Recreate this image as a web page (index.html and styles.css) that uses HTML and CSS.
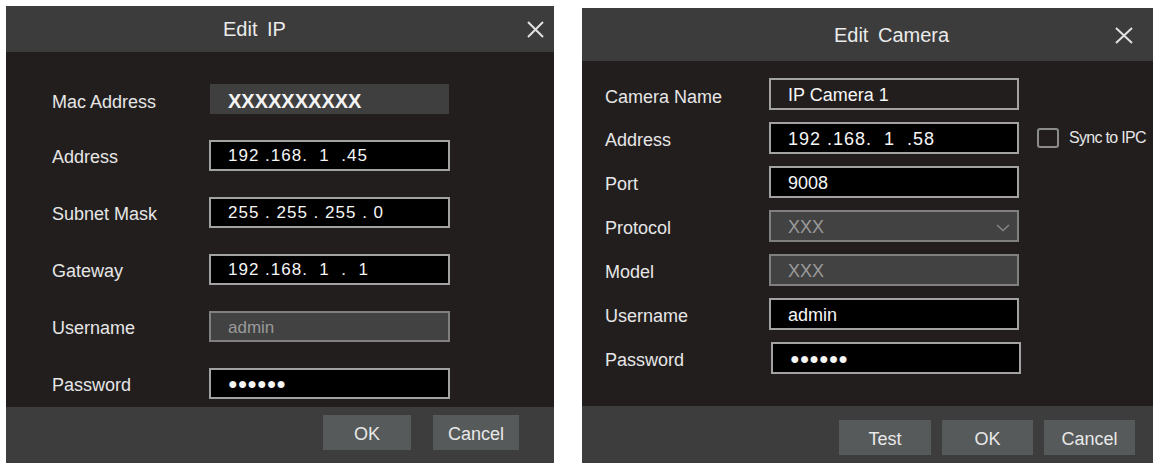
FILE: index.html
```html
<!DOCTYPE html>
<html>
<head>
<meta charset="utf-8">
<link rel="stylesheet" href="styles.css">
</head>
<body>
<div class="page">
  <div class="dialog dialog-ip">
    <div class="header">
      <span class="title">Edit IP</span>
      <svg class="close" width="17" height="17" viewBox="0 0 17 17"><path d="M1 1 L16 16 M16 1 L1 16" stroke="#e2e2e2" stroke-width="2" fill="none"/></svg>
    </div>
    <div class="body">
      <div class="label">Mac Address</div>
      <div class="mac">XXXXXXXXXX</div>
      <div class="label">Address</div>
      <div class="field ip">192 .168.  1  .45</div>
      <div class="label">Subnet Mask</div>
      <div class="field ip">255 . 255 . 255 . 0</div>
      <div class="label">Gateway</div>
      <div class="field ip">192 .168.  1  .  1</div>
      <div class="label">Username</div>
      <div class="field disabled">admin</div>
      <div class="label">Password</div>
      <div class="field dots">●●●●●●</div>
    </div>
    <div class="footer">
      <div class="btn btn-ok">OK</div>
      <div class="btn btn-cancel">Cancel</div>
    </div>
  </div>

  <div class="dialog dialog-cam">
    <div class="header">
      <span class="title">Edit Camera</span>
      <svg class="close" width="18" height="17" viewBox="0 0 18 17"><path d="M1 1 L17 16 M17 1 L1 16" stroke="#e2e2e2" stroke-width="2" fill="none"/></svg>
    </div>
    <div class="body">
      <div class="label">Camera Name</div>
      <div class="field name">IP Camera 1</div>
      <div></div>
      <div class="label">Address</div>
      <div class="field ip black">192 .168.  1  .58</div>
      <div class="sync"><span class="checkbox"></span><span class="sync-text">Sync to IPC</span></div>
      <div class="label">Port</div>
      <div class="field black">9008</div>
      <div></div>
      <div class="label">Protocol</div>
      <div class="field disabled select">XXX<svg class="chev" width="14" height="8" viewBox="0 0 14 8"><path d="M1 1 L7 6.5 L13 1" stroke="#8a8a8a" stroke-width="1.3" fill="none"/></svg></div>
      <div></div>
      <div class="label">Model</div>
      <div class="field disabled">XXX</div>
      <div></div>
      <div class="label">Username</div>
      <div class="field black">admin</div>
      <div></div>
      <div class="label">Password</div>
      <div class="field black dots pw">●●●●●●</div>
      <div></div>
    </div>
    <div class="footer">
      <div class="btn btn-test">Test</div>
      <div class="btn btn-ok2">OK</div>
      <div class="btn btn-cancel2">Cancel</div>
    </div>
  </div>
</div>
</body>
</html>
```

FILE: styles.css
```css
* { box-sizing: border-box; }
html, body { margin: 0; padding: 0; background: #ffffff; }
body {
  font-family: "Liberation Sans", Arial, sans-serif;
  width: 1168px;
  height: 476px;
  overflow: hidden;
}
.page {
  display: flex;
  align-items: flex-start;
  gap: 28px;
  padding: 6px 0 0 6px;
}
.dialog {
  display: flex;
  flex-direction: column;
  background: #221e1e;
}
.dialog-ip { width: 548px; height: 457px; }
.dialog-cam { width: 571px; height: 455px; margin-top: 2px; }

.header {
  display: flex;
  align-items: center;
  background: #3c3c3c;
  color: #ebebeb;
  font-size: 20px;
}
.dialog-ip .header { height: 46px; padding-right: 10px; }
.dialog-cam .header { height: 53px; padding-right: 20px; }
.title {
  flex: 1;
  text-align: center;
  word-spacing: 4px;
}
.dialog-ip .title { padding-right: 24px; }
.dialog-cam .title { padding-left: 86px; padding-top: 2px; }
.close { display: block; }
.dialog-cam .close { margin-top: 2px; }

.body {
  flex: 1;
  display: grid;
  align-items: center;
}
.dialog-ip .body {
  grid-template-columns: 157px 241px;
  grid-auto-rows: 31px;
  row-gap: 26px;
  padding: 31px 0 0 46px;
  align-content: start;
}
.dialog-cam .body {
  grid-template-columns: 164px 250px auto;
  grid-auto-rows: 32px;
  row-gap: 12px;
  padding: 17px 0 0 23px;
  align-content: start;
}
.label {
  color: #e6e6e6;
  font-size: 18px;
  padding-top: 4px;
  white-space: nowrap;
}
.dialog-ip .body .label:first-child { padding-top: 7px; }
.dialog-cam .body .label:first-child { padding-top: 6px; }
.mac {
  height: 30px;
  width: 239px;
  margin-left: 1px;
  background: #3f3f3f;
  color: #f4f4f4;
  font-size: 20px;
  font-weight: bold;
  padding-left: 18px;
  line-height: 35px;
}
.field {
  height: 100%;
  border: 2px solid #a2a2a2;
  background: #000;
  color: #f6f6f6;
  font-size: 17px;
  padding-left: 17px;
  display: flex;
  align-items: center;
  white-space: pre;
}
.dialog-cam .field { font-size: 18px; padding-top: 3px; }
.field.ip { letter-spacing: 1px; }
.field.name { background: #221e1e; }
.field.disabled {
  background: #424242;
  border-color: #808080;
  color: #9a9a9a;
}
.dialog-ip .field.disabled { padding-top: 2px; }
.field.select { justify-content: space-between; padding-right: 7px; }
.chev { display: block; }
.field.dots { font-size: 16px; letter-spacing: 0px; }
.dialog-cam .field.dots { font-size: 16px; padding-top: 1px; }
.field.pw { margin-left: 2px; margin-right: -2px; }

.sync {
  display: flex;
  align-items: center;
  margin-left: 18px;
  gap: 10px;
}
.checkbox {
  display: block;
  width: 22px;
  height: 20px;
  border: 2px solid #8c8c8c;
  border-radius: 3px;
}
.sync-text {
  color: #e6e6e6;
  font-size: 16px;
  letter-spacing: -0.7px;
  white-space: nowrap;
}

.footer {
  display: flex;
  justify-content: flex-end;
  align-items: flex-start;
  background: #3d3d3d;
}
.dialog-ip .footer { height: 56px; padding: 8px 35px 0 0; gap: 22px; }
.dialog-cam .footer { height: 57px; padding: 14px 18px 0 0; gap: 11px; }
.btn {
  height: 35px;
  background: #565a5a;
  color: #e8e8e8;
  font-size: 18px;
  display: flex;
  align-items: center;
  justify-content: center;
  padding-top: 3px;
}
.btn-ok { width: 88px; }
.btn-cancel { width: 86px; }
.btn-test { width: 92px; }
.btn-ok2 { width: 91px; }
.btn-cancel2 { width: 91px; }
```
